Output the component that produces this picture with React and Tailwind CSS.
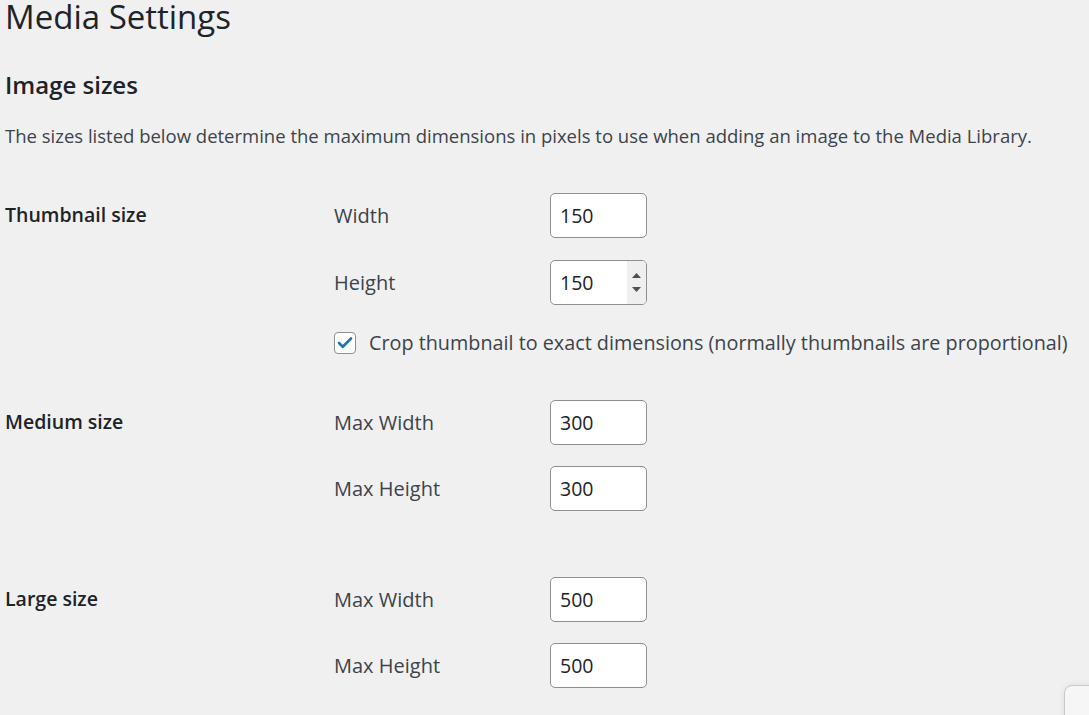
import { Check } from 'lucide-react';

const FONT = { fontFamily: '"Open Sans", "Noto Sans", sans-serif' };

function NumField({ value, spinner }) {
  return (
    <div className="relative w-[97px] h-[45px]">
      <input
        type="text"
        readOnly
        defaultValue={value}
        className="w-full h-full rounded-[5px] border border-[#8c8f94] bg-white pl-[9px] text-[19.5px] text-[#1d2327] outline-none"
      />
      {spinner && (
        <div className="absolute right-[1px] top-[1px] bottom-[1px] w-[19px] rounded-r-[4px] bg-[#efefef] flex flex-col items-center justify-center gap-[9px]">
          <svg width="9" height="5" viewBox="0 0 9 5"><path d="M0 5 L4.5 0 L9 5 Z" fill="#505050" /></svg>
          <svg width="9" height="5" viewBox="0 0 9 5"><path d="M0 0 L9 0 L4.5 5 Z" fill="#505050" /></svg>
        </div>
      )}
    </div>
  );
}

function Field({ label, value, spinner, className = '' }) {
  return (
    <div className={`flex items-center ${className}`}>
      <span className="w-[216px] text-[20px] text-[#3c434a]">{label}</span>
      <NumField value={value} spinner={spinner} />
    </div>
  );
}

function SizeRow({ title, children, className = '' }) {
  return (
    <div className={`flex ${className}`}>
      <div className="w-[329px] pt-[8px] text-[19.5px] leading-[28px] font-semibold text-[#1d2327]">{title}</div>
      <div className="flex flex-col">{children}</div>
    </div>
  );
}

export default function App() {
  return (
    <div className="relative min-h-[715px] overflow-hidden bg-[#f0f0f1] pl-[5px]" style={FONT}>
      <h1 className="text-[33px] leading-[34px] text-[#1d2327] font-normal">Media Settings</h1>
      <h2 className="mt-[36px] text-[24px] leading-[30px] font-semibold text-[#1d2327]">Image sizes</h2>
      <p className="mt-[23px] text-[18.5px] leading-[26px] text-[#3c434a]">
        The sizes listed below determine the maximum dimensions in pixels to use when adding an image to the Media Library.
      </p>

      <SizeRow title="Thumbnail size" className="mt-[44px]">
        <Field label="Width" value="150" />
        <Field label="Height" value="150" spinner className="mt-[22px]" />
        <label className="mt-[24px] flex items-center gap-[13px] text-[19.8px] leading-[28px] text-[#3c434a]">
          <span className="flex items-center justify-center w-[22px] h-[22px] rounded-[4px] border border-[#8c8f94] bg-white">
            <Check className="w-[18px] h-[18px] text-[#2271b1]" strokeWidth={3.5} />
          </span>
          Crop thumbnail to exact dimensions (normally thumbnails are proportional)
        </label>
      </SizeRow>

      <SizeRow title="Medium size" className="mt-[43px]">
        <Field label="Max Width" value="300" />
        <Field label="Max Height" value="300" className="mt-[21px]" />
      </SizeRow>

      <SizeRow title="Large size" className="mt-[66px]">
        <Field label="Max Width" value="500" />
        <Field label="Max Height" value="500" className="mt-[21px]" />
      </SizeRow>

      <div className="absolute left-[1064px] top-[685px] w-[60px] h-[60px] rounded-[8px] border border-[#c9c9c9] bg-[#f6f6f6] shadow-[0_0_6px_rgba(0,0,0,0.08)]" />
    </div>
  );
}
